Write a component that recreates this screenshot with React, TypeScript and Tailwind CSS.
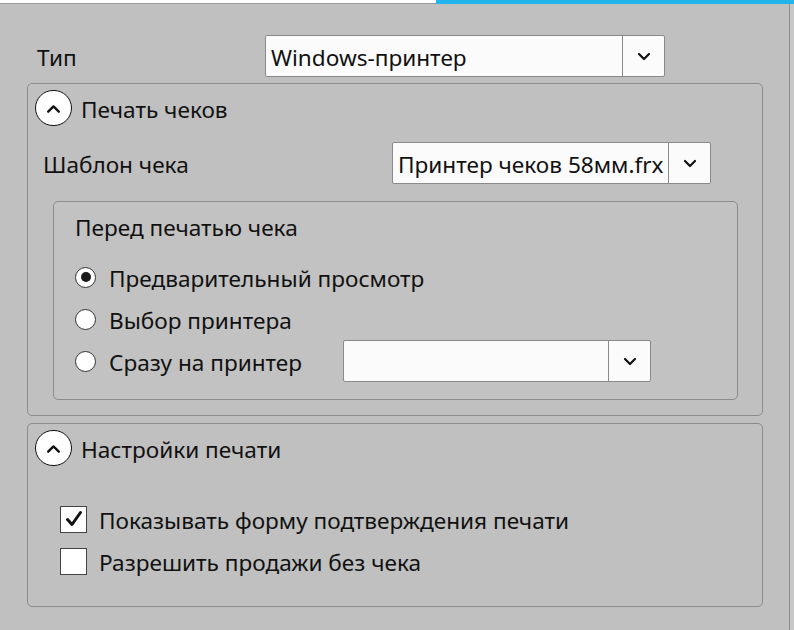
import React from "react";

const Chevron = ({ up = false, size = 16 }: { up?: boolean; size?: number }) => (
  <svg width={size} height={size} viewBox="0 0 16 16" className="block">
    <path
      d={up ? "M3 11 L8 6 L13 11" : "M3 6 L8 11 L13 6"}
      fill="none"
      stroke="#111"
      strokeWidth={2.2}
      strokeLinecap="round"
      strokeLinejoin="round"
    />
  </svg>
);

const T = ({ children, className = "" }: { children: React.ReactNode; className?: string }) => (
  <span className={"pt-[4px] whitespace-nowrap " + className}>{children}</span>
);

const Combo = ({ text, w, btn = 42 }: { text?: string; w: number; btn?: number }) => (
  <div
    className="h-[42px] flex border border-[#8a8a8a] bg-[#fbfbfb] rounded-[2px]"
    style={{ width: w }}
  >
    <div className="flex-1 flex items-center pl-[5px] overflow-hidden whitespace-nowrap">
      {text && <T>{text}</T>}
    </div>
    <div
      className="border-l border-[#8a8a8a] flex items-center justify-center"
      style={{ width: btn }}
    >
      <Chevron />
    </div>
  </div>
);

const Expander = ({ title }: { title: string }) => (
  <div className="flex items-center h-[36px] pl-[7px]">
    <div className="w-[37px] h-[36px] rounded-full border-[1.5px] border-[#111] bg-white flex items-center justify-center">
      <Chevron up size={17} />
    </div>
    <T className="ml-[9px]">{title}</T>
  </div>
);

const Radio = ({ checked, label }: { checked?: boolean; label: string }) => (
  <div className="flex items-center">
    <div className="w-[21px] h-[21px] rounded-full border border-[#333] bg-white flex items-center justify-center">
      {checked && <div className="w-[10px] h-[10px] rounded-full bg-[#1a1a1a]" />}
    </div>
    <T className="ml-[13px]">{label}</T>
  </div>
);

const Check = ({ checked, label }: { checked?: boolean; label: string }) => (
  <div className="flex items-center h-[42px] pl-[32px]">
    <div className="w-[27px] h-[27px] border border-[#444] bg-white flex items-center justify-center">
      {checked && (
        <svg width="20" height="20" viewBox="0 0 20 20">
          <path d="M3.5 10.5 L8 15.5 L16.5 3.5" fill="none" stroke="#111" strokeWidth={3} strokeLinecap="round" strokeLinejoin="round" />
        </svg>
      )}
    </div>
    <T className="ml-[12px]">{label}</T>
  </div>
);

export default function App() {
  return (
    <div
      className="w-[794px] h-[630px] bg-[#c0c0c0] flex flex-col overflow-hidden text-[#111] text-[22.6px] leading-none"
      style={{ fontFamily: '"Noto Sans", "Open Sans", sans-serif' }}
    >
      <div className="flex h-[4px] shrink-0">
        <div className="w-[436px] bg-white border-b border-[#9a9a9a]" />
        <div className="flex-1 bg-[#22b4ec]" />
      </div>
      <div className="flex flex-1">
        <div className="w-[789px] pl-[27px] pt-[31px]">
          {/* Тип */}
          <div className="flex items-center h-[42px]">
            <div className="w-[238px] pl-[10px] flex"><T>Тип</T></div>
            <Combo text="Windows-принтер" w={400} />
          </div>

          {/* Section 1 */}
          <div className="mt-[6px] w-[736px] border border-[#8c8c8c] rounded-[5px] pb-[15px]">
            <div className="pt-[6px]">
              <Expander title="Печать чеков" />
            </div>
            <div className="mt-[16px] flex items-center h-[42px]">
              <div className="w-[364px] pl-[15px] flex"><T>Шаблон чека</T></div>
              <Combo text="Принтер чеков 58мм.frx" w={319} />
            </div>
            <div className="mt-[17px] ml-[25px] w-[685px] border border-[#8c8c8c] rounded-[5px] bg-[#c2c2c2] pb-[17px]">
              <div className="h-[48px] flex items-center pl-[21px]"><T>Перед печатью чека</T></div>
              <div className="mt-[6px] pl-[21px]">
                <div className="h-[42px] flex items-center">
                  <Radio checked label="Предварительный просмотр" />
                </div>
                <div className="h-[42px] flex items-center">
                  <Radio label="Выбор принтера" />
                </div>
                <div className="h-[42px] flex items-center">
                  <div className="w-[268px]">
                    <Radio label="Сразу на принтер" />
                  </div>
                  <Combo w={308} />
                </div>
              </div>
            </div>
          </div>

          {/* Section 2 */}
          <div className="mt-[7px] w-[736px] border border-[#8c8c8c] rounded-[5px] pb-[24px]">
            <div className="pt-[6px]">
              <Expander title="Настройки печати" />
            </div>
            <div className="mt-[32px]">
              <Check checked label="Показывать форму подтверждения печати" />
              <Check label="Разрешить продажи без чека" />
            </div>
          </div>
        </div>
        <div className="w-px bg-[#8f8f8f]" />
        <div className="flex-1 bg-[#c8c8c8]" />
      </div>
    </div>
  );
}
